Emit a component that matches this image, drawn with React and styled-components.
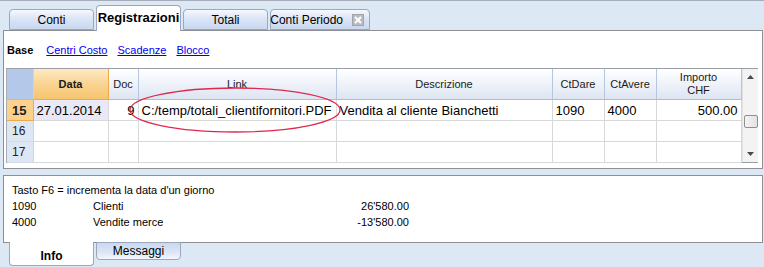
import React from 'react';
import styled, { createGlobalStyle } from 'styled-components';

const GlobalStyle = createGlobalStyle`
  html, body {
    margin: 0;
    padding: 0;
  }
  body {
    font-family: 'Liberation Sans', Arial, sans-serif;
    background: #dde8f5;
  }
`;

const columns = [
  { key: 'num', width: 26 },
  { key: 'data', label: 'Data', width: 75, active: true },
  { key: 'doc', label: 'Doc', width: 30 },
  { key: 'link', label: 'Link', width: 198 },
  { key: 'desc', label: 'Descrizione', width: 216 },
  { key: 'dare', label: 'CtDare', width: 52 },
  { key: 'avere', label: 'CtAvere', width: 52 },
  { key: 'importo', label: 'Importo\nCHF', width: 85 },
];

const rows = [
  {
    num: 15,
    data: '27.01.2014',
    doc: '9',
    link: 'C:/temp/totali_clientifornitori.PDF',
    desc: 'Vendita al cliente Bianchetti',
    dare: '1090',
    avere: '4000',
    importo: '500.00',
  },
  { num: 16 },
  { num: 17 },
];

const accounts = [
  { code: '1090', name: 'Clienti', amount: "26'580.00" },
  { code: '4000', name: 'Vendite merce', amount: "-13'580.00" },
];

function App() {
  return (
    <Window>
      <GlobalStyle />
      <TabBar>
        <Tab>Conti</Tab>
        <Tab active>Registrazioni</Tab>
        <Tab>Totali</Tab>
        <Tab wide>
          Conti Periodo
          <CloseBox>
            <svg width="8" height="8" viewBox="0 0 8 8">
              <path d="M1 1 L7 7 M7 1 L1 7" stroke="#fff" strokeWidth="2" />
            </svg>
          </CloseBox>
        </Tab>
      </TabBar>

      <MainPanel>
        <SubNav>
          <strong>Base</strong>
          <NavLink>Centri Costo</NavLink>
          <NavLink>Scadenze</NavLink>
          <NavLink>Blocco</NavLink>
        </SubNav>

        <GridFrame>
          <Table>
            <colgroup>
              {columns.map((c) => (
                <col key={c.key} style={{ width: c.width }} />
              ))}
            </colgroup>
            <thead>
              <tr>
                {columns.map((c) =>
                  c.key === 'num' ? (
                    <Corner key={c.key} />
                  ) : (
                    <HeadCell key={c.key} active={c.active}>
                      {c.label}
                    </HeadCell>
                  )
                )}
              </tr>
            </thead>
            <tbody>
              {rows.map((r) => (
                <tr key={r.num}>
                  <RowNum current={r.data}>{r.num}</RowNum>
                  <Cell selected={!!r.data}>{r.data}</Cell>
                  <Cell align="right">{r.doc}</Cell>
                  <Cell>{r.link}</Cell>
                  <Cell>{r.desc}</Cell>
                  <Cell>{r.dare}</Cell>
                  <Cell>{r.avere}</Cell>
                  <Cell align="right">{r.importo}</Cell>
                </tr>
              ))}
            </tbody>
          </Table>
          <ScrollBar>
            <Arrow>
              <svg width="7" height="4" viewBox="0 0 7 4">
                <path d="M0 4 L3.5 0 L7 4 Z" fill="#4a4a4a" />
              </svg>
            </Arrow>
            <Track>
              <Thumb />
            </Track>
            <Arrow>
              <svg width="7" height="4" viewBox="0 0 7 4">
                <path d="M0 0 L3.5 4 L7 0 Z" fill="#4a4a4a" />
              </svg>
            </Arrow>
          </ScrollBar>
          <Ellipse width="214" height="48" viewBox="0 0 214 48">
            <ellipse cx="107" cy="24" rx="105" ry="22" fill="none" stroke="#e0284f" strokeWidth="1.3" />
          </Ellipse>
        </GridFrame>
      </MainPanel>

      <InfoPanel>
        <InfoLine>Tasto F6 = incrementa la data d'un giorno</InfoLine>
        {accounts.map((a) => (
          <AccountRow key={a.code}>
            <span>{a.code}</span>
            <span>{a.name}</span>
            <Amount>{a.amount}</Amount>
          </AccountRow>
        ))}
      </InfoPanel>

      <BottomTabs>
        <BottomTab active>Info</BottomTab>
        <BottomTab>Messaggi</BottomTab>
      </BottomTabs>
    </Window>
  );
}

export default App;

const Window = styled.div`
  width: 764px;
  height: 267px;
  box-sizing: border-box;
  border-top: 1px solid #a7adb8;
  background: #dde8f5;
  overflow: hidden;
`;

const TabBar = styled.div`
  display: flex;
  align-items: flex-end;
  gap: 2px;
  height: 29px;
  padding-left: 9px;
`;

const Tab = styled.div`
  display: flex;
  align-items: center;
  justify-content: ${(p) => (p.wide ? 'flex-end' : 'center')};
  gap: 9px;
  box-sizing: border-box;
  width: ${(p) => (p.wide ? '100px' : '85px')};
  height: ${(p) => (p.active ? '26px' : '21px')};
  margin-bottom: ${(p) => (p.active ? '-1px' : '0')};
  padding: ${(p) => (p.active ? '0 0 3px' : p.wide ? '0 5px 0 0' : '0')};
  border: 1px solid #9aa7bd;
  border-bottom: ${(p) => (p.active ? 'none' : '1px solid #9aa7bd')};
  border-radius: 4px 4px 0 0;
  background: ${(p) =>
    p.active ? '#ffffff' : 'linear-gradient(180deg, #f6f9fd 0%, #dbe5f5 45%, #c9d8f0 100%)'};
  color: #000;
  font-size: ${(p) => (p.active ? '13px' : '12px')};
  font-weight: ${(p) => (p.active ? 'bold' : 'normal')};
  white-space: nowrap;
  position: relative;
  z-index: ${(p) => (p.active ? 2 : 1)};
`;

const CloseBox = styled.span`
  display: inline-flex;
  align-items: center;
  justify-content: center;
  flex-shrink: 0;
  width: 12px;
  height: 12px;
  background: #b9bcc2;
  border: 1px solid #a0a3a8;
  box-sizing: border-box;
`;

const MainPanel = styled.div`
  position: relative;
  height: 139px;
  margin: 0 1px 0 3px;
  box-sizing: border-box;
  border: 1px solid #8e8f94;
  background: #fff;
`;

const SubNav = styled.div`
  display: flex;
  align-items: center;
  gap: 10px;
  height: 37px;
  padding-left: 3px;
  font-size: 11px;
  color: #000;

  strong {
    font-weight: bold;
    margin-right: 3px;
  }
`;

const NavLink = styled.span`
  color: #0000ee;
  text-decoration: underline;
`;

const GridFrame = styled.div`
  position: relative;
  display: flex;
  width: 752px;
  height: 95px;
  margin-left: 2px;
  box-sizing: border-box;
  border: 1px solid #9b9ea5;
  border-left-color: #a8acb4;
`;

const Table = styled.table`
  table-layout: fixed;
  width: 734px;
  border-collapse: collapse;
  font-size: 13px;
  color: #000;
`;

const Corner = styled.th`
  height: 30px;
  padding: 0;
  background: #b4c9e9;
  border-right: 1px solid #c9d6ea;
  border-bottom: 1px solid #a9bcdb;
`;

const HeadCell = styled.th`
  height: 30px;
  padding: 0 2px;
  box-sizing: border-box;
  font-size: 11px;
  line-height: 13px;
  white-space: pre-line;
  font-weight: ${(p) => (p.active ? 'bold' : 'normal')};
  color: #1a1a1a;
  background: ${(p) =>
    p.active
      ? 'linear-gradient(180deg, #fde9c3 0%, #f9d391 50%, #f6c46e 100%)'
      : 'linear-gradient(180deg, #ffffff 0%, #eef2f9 50%, #dde5f2 100%)'};
  border-right: 1px solid ${(p) => (p.active ? '#f0a94a' : '#b7c6de')};
  border-bottom: 1px solid ${(p) => (p.active ? '#f0a94a' : '#a9bcdb')};
`;

const RowNum = styled.td`
  height: 20px;
  padding: 0 0 0 5px;
  font-size: ${(p) => (p.current ? '13px' : '12px')};
  font-weight: ${(p) => (p.current ? 'bold' : 'normal')};
  color: #222;
  background: ${(p) => (p.current ? '#fbd18b' : '#dde7f4')};
  border-right: 1px solid ${(p) => (p.current ? '#f0a94a' : '#c9d6ea')};
  border-bottom: 1px solid ${(p) => (p.current ? '#f0a94a' : '#d4dae3')};
`;

const Cell = styled.td`
  height: 20px;
  padding: 0 3px;
  white-space: nowrap;
  overflow: hidden;
  text-align: ${(p) => p.align || 'left'};
  background: ${(p) => (p.selected ? '#e8e8f6' : '#fff')};
  border-right: 1px solid #d8d8d8;
  border-bottom: 1px solid #d8d8d8;
`;

const ScrollBar = styled.div`
  display: flex;
  flex-direction: column;
  width: 17px;
  background: #f3f3f3;
  border-left: 1px solid #e2e2e2;
`;

const Arrow = styled.div`
  display: flex;
  align-items: center;
  justify-content: center;
  height: 16px;
`;

const Track = styled.div`
  flex: 1;
  padding-top: 30px;
`;

const Thumb = styled.div`
  width: 14px;
  height: 13px;
  margin-left: 1px;
  box-sizing: border-box;
  border: 1px solid #8f8f8f;
  border-radius: 2px;
  background: linear-gradient(90deg, #f4f4f4, #e2e2e2);
`;

const Ellipse = styled.svg`
  position: absolute;
  left: 121px;
  top: 17px;
  pointer-events: none;
`;

const InfoPanel = styled.div`
  height: 68px;
  margin: 6px 1px 0 3px;
  padding: 6px 0 0 8px;
  box-sizing: border-box;
  border: 1px solid #8e8f94;
  background: #fff;
  font-size: 11px;
  color: #000;
`;

const InfoLine = styled.div`
  height: 16px;
  line-height: 16px;
`;

const AccountRow = styled.div`
  display: grid;
  grid-template-columns: 81px 160px 156px;
  height: 16px;
  line-height: 16px;
`;

const Amount = styled.span`
  text-align: right;
`;

const BottomTabs = styled.div`
  display: flex;
  align-items: flex-start;
  gap: 2px;
  padding-left: 9px;
  margin-top: -1px;
`;

const BottomTab = styled.div`
  display: flex;
  align-items: center;
  justify-content: center;
  box-sizing: border-box;
  width: 85px;
  height: ${(p) => (p.active ? '24px' : '18px')};
  padding-top: ${(p) => (p.active ? '4px' : '0')};
  border: 1px solid #9aa7bd;
  border-top: ${(p) => (p.active ? 'none' : '1px solid #9aa7bd')};
  border-radius: 0 0 4px 4px;
  background: ${(p) =>
    p.active ? '#ffffff' : 'linear-gradient(180deg, #c9d8f0 0%, #dbe5f5 55%, #f3f7fc 100%)'};
  font-size: 12px;
  font-weight: ${(p) => (p.active ? 'bold' : 'normal')};
  color: #000;
`;
